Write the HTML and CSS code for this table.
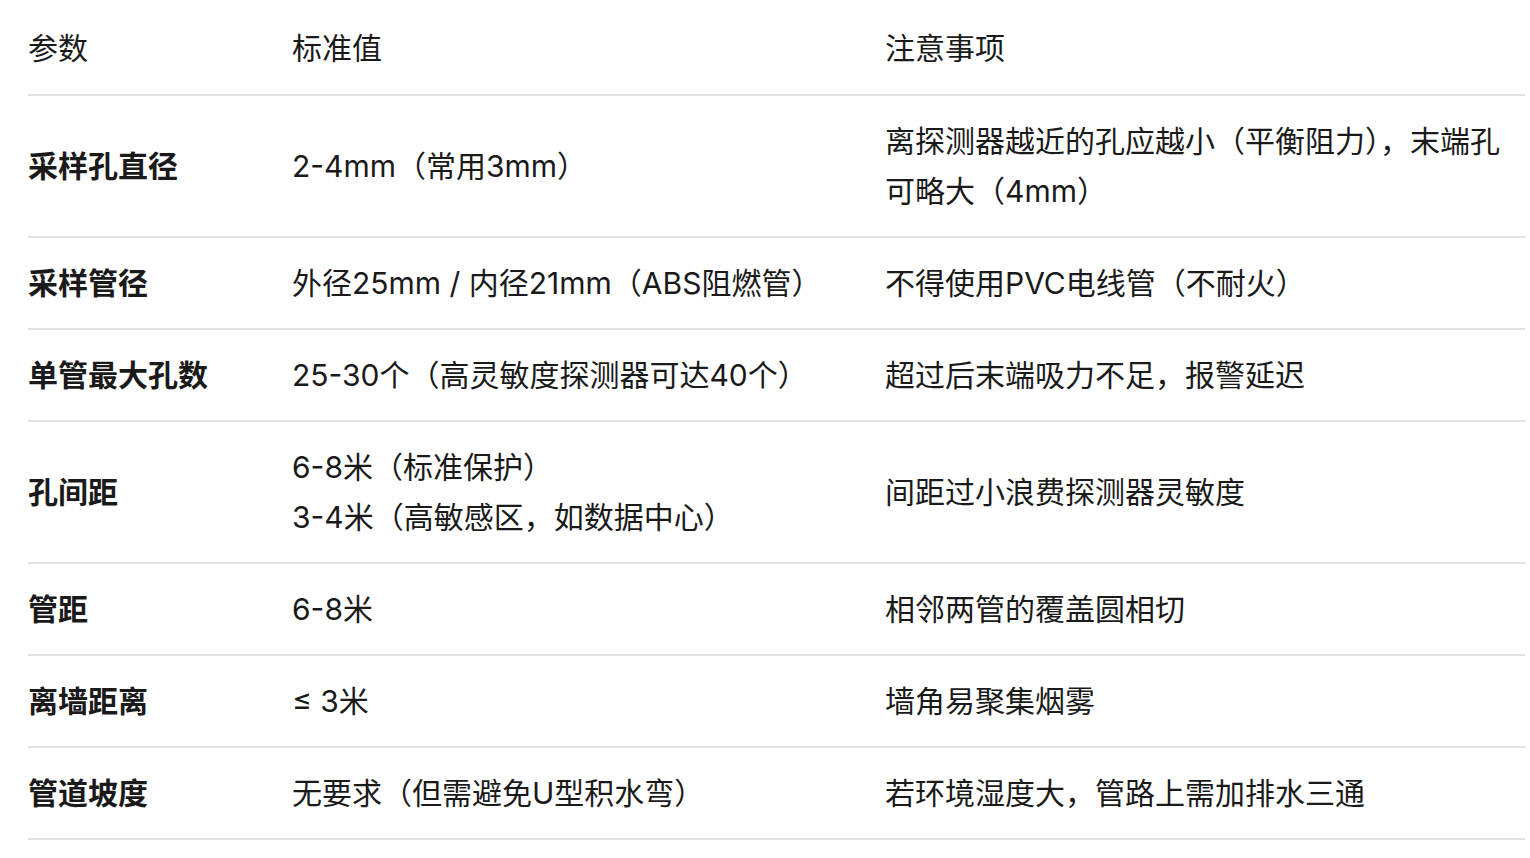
FILE: index.html
```html
<!DOCTYPE html>
<html lang="zh-CN">
<head>
<meta charset="utf-8">
<link rel="stylesheet" href="styles.css">
</head>
<body>
<div class="wrap">
<table class="spec">
  <colgroup>
    <col class="c1"><col class="c2"><col class="c3">
  </colgroup>
  <thead>
    <tr><th>参数</th><th>标准值</th><th>注意事项</th></tr>
  </thead>
  <tbody>
    <tr><td class="name">采样孔直径</td><td>2-4mm（常用3mm）</td><td>离探测器越近的孔应越小（平衡阻力），末端孔可略大（4mm）</td></tr>
    <tr><td class="name">采样管径</td><td>外径25mm / 内径21mm（ABS阻燃管）</td><td>不得使用PVC电线管（不耐火）</td></tr>
    <tr><td class="name">单管最大孔数</td><td>25-30个（高灵敏度探测器可达40个）</td><td>超过后末端吸力不足，报警延迟</td></tr>
    <tr><td class="name">孔间距</td><td>6-8米（标准保护）<br>3-4米（高敏感区，如数据中心）</td><td>间距过小浪费探测器灵敏度</td></tr>
    <tr><td class="name">管距</td><td>6-8米</td><td>相邻两管的覆盖圆相切</td></tr>
    <tr><td class="name">离墙距离</td><td>≤ 3米</td><td>墙角易聚集烟雾</td></tr>
    <tr><td class="name">管道坡度</td><td>无要求（但需避免U型积水弯）</td><td>若环境湿度大，管路上需加排水三通</td></tr>
  </tbody>
</table>
</div>
</body>
</html>
```
FILE: styles.css
```css
html, body {
  margin: 0;
  padding: 0;
  background: #ffffff;
}
.wrap {
  padding: 3px 5px 0 28px;
}
.spec {
  width: 1497px;
  border-collapse: collapse;
  table-layout: fixed;
  font-family: "Inter", "Noto Sans CJK SC", sans-serif;
  font-size: 30px;
  line-height: 50px;
  color: #1a1a1a;
}
.c1 { width: 264px; }
.c2 { width: 593px; }
.spec th, .spec td {
  text-align: left;
  vertical-align: middle;
  padding: 20px 4px 20px 0;
  border-bottom: 2px solid #e3e3e3;
}
.spec th {
  font-weight: 400;
  padding: 20px 4px 21px 0;
}
.spec td.name {
  font-weight: 700;
}
```
